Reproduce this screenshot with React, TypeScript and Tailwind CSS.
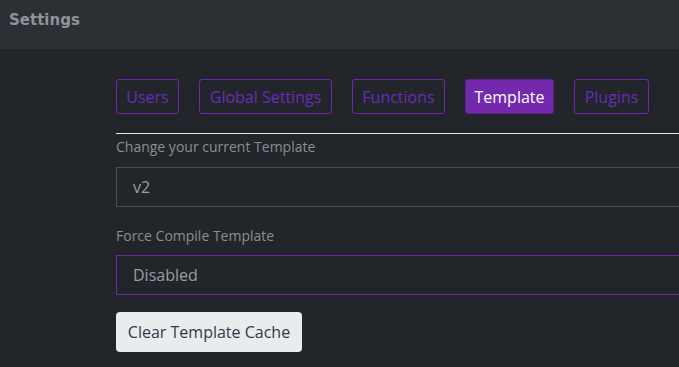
import React from "react";

const tabs = [
  { name: "Users", w: "w-[63px]" },
  { name: "Global Settings", w: "w-[133px]" },
  { name: "Functions", w: "w-[93px]" },
  { name: "Template", w: "w-[89px]" },
  { name: "Plugins", w: "w-[75px]" },
];

export default function App() {
  return (
    <div
      className="h-[367px] w-[679px] overflow-hidden bg-[#222529]"
      style={{ fontFamily: "'Open Sans', Lato, sans-serif" }}
    >
      <div className="h-[49px] bg-[#2c2f34] pl-[9px] pt-[9px]">
        <h1
          className="text-[15px] font-bold text-[#8e939a]"
          style={{ fontFamily: "'DejaVu Sans', sans-serif" }}
        >
          Settings
        </h1>
      </div>

      <div className="w-[760px] pl-[116px] pt-[30px]">
        <div className="flex gap-[20px]">
          {tabs.map((t) =>
            t.name === "Template" ? (
              <button
                key={t.name}
                className={`h-[35px] shrink-0 ${t.w} rounded-[3px] border border-[#5b2391] bg-[#7328ae] text-[16px] text-white`}
              >
                {t.name}
              </button>
            ) : (
              <button
                key={t.name}
                className={`h-[35px] shrink-0 ${t.w} rounded-[3px] border border-[#7026b0] text-[16px] text-[#6a2cbf]`}
              >
                {t.name}
              </button>
            )
          )}
        </div>

        <div className="mt-[19px] w-[600px] border-t border-[#e4e4e4]" />

        <label className="mt-[3px] block text-[14px] leading-[20px] text-[#8a8e94]">
          Change your current Template
        </label>
        <div className="mt-[10px] flex h-[40px] w-[600px] items-center border border-[#4a4d52] pl-[16px] text-[16px] text-[#9a9da2]">
          v2
        </div>

        <label className="mt-[19px] block text-[14px] leading-[20px] text-[#8a8e94]">
          Force Compile Template
        </label>
        <div className="mt-[9px] flex h-[40px] w-[600px] items-center border border-[#6c2aa6] pl-[16px] text-[16px] text-[#9a9da2]">
          Disabled
        </div>

        <button className="mt-[17px] h-[40px] w-[186px] rounded-[4px] bg-[#e9ecef] text-[16px] text-[#343a40]">
          Clear Template Cache
        </button>
      </div>
    </div>
  );
}
